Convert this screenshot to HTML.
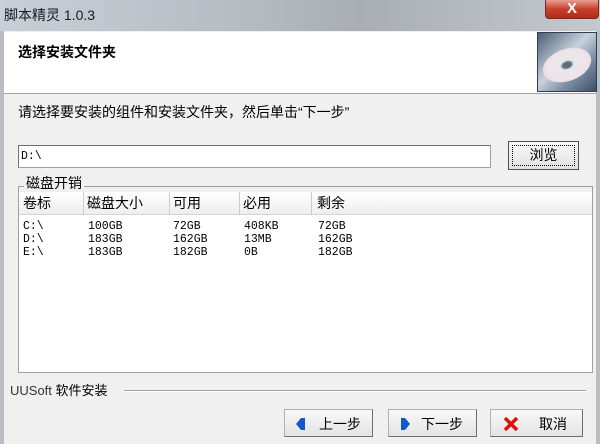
<!DOCTYPE html>
<html><head><meta charset="utf-8"><style>
*{margin:0;padding:0;box-sizing:border-box}
body{width:600px;height:444px;overflow:hidden;background:#f0f0f0;font-family:"Liberation Sans","Noto Sans CJK SC",sans-serif;font-size:13px;color:#000;position:relative}
.a{position:absolute}
.mono{font-family:"Liberation Mono","Noto Sans CJK SC",monospace;font-size:11.5px}
.btn{position:absolute;height:28px;background:linear-gradient(#f8f8f8,#e4e4e4);border:1px solid #b0b0b0;border-right-color:#707070;border-bottom-color:#707070;font-size:14px}
.btn svg{position:absolute;top:7px}
.btn span{position:absolute;top:4px}
</style></head><body>
<div class="a" style="left:0;top:0;width:600px;height:31px;background:linear-gradient(90deg,#c9cfd6,#b6bcc2 40%,#a9aeb3 60%,#c4c9cf)"></div>
<div class="a" style="left:4px;top:5px;font-size:14px;color:#1a1a2a">脚本精灵 1.0.3</div>
<div class="a" style="left:545px;top:0;width:54px;height:19px;background:linear-gradient(#e6a090,#c8412c 50%,#b22a18);border:1px solid #7a2a20;border-top:none;border-radius:0 0 4px 4px;color:#fff;font-weight:bold;font-size:15px;text-align:center;line-height:17px">X</div>
<div class="a" style="left:0;top:31px;width:4px;height:413px;background:#b9bec4"></div>
<div class="a" style="left:596px;top:31px;width:4px;height:413px;background:#b9bec4"></div>
<div class="a" style="left:4px;top:32px;width:592px;height:62px;background:#fff;border-bottom:1px solid #a0a0a0"></div>
<div class="a" style="left:18px;top:42px;font-weight:bold;font-size:14px">选择安装文件夹</div>
<div class="a" style="left:537px;top:32px;width:60px;height:60px;background:linear-gradient(135deg,#4b5d75,#c9d2de 45%,#7a8ca2 70%,#3e5068);border:1px solid #2d4058"></div>
<div class="a" style="left:542px;top:49px;width:50px;height:32px;border-radius:50%;background:radial-gradient(ellipse,#5d6c7c 12%,#e4e8ec 20%,#f0e4ea 55%,#d4d6d8 100%);transform:rotate(-20deg)"></div>
<div class="a" style="left:18px;top:102px;font-size:14px">请选择要安装的组件和安装文件夹，然后单击“下一步”</div>
<div class="a mono" style="left:18px;top:145px;width:473px;height:23px;background:#fff;border:1px solid #a0a0a0;border-top-color:#707070;border-left-color:#707070;padding:4px 2px">D:\</div>
<div class="a" style="left:508px;top:141px;width:71px;height:29px;border:1px solid #505050;background:linear-gradient(#f8f8f8,#e2e2e2);padding:3px"><div style="border:1px dotted #000;width:63px;height:21px;text-align:center;line-height:19px;font-size:14px">浏览</div></div>
<div class="a" style="left:18px;top:186px;width:575px;height:187px;border:1px solid #a0a0a0"></div>
<div class="a" style="left:24px;top:176px;background:#f0f0f0;padding:0 2px;font-size:14px;line-height:14px">磁盘开销</div>
<div class="a" style="left:19px;top:192px;width:573px;height:180px;background:#fff"></div>
<div class="a" style="left:19px;top:192px;width:573px;height:23px;background:linear-gradient(#fff,#eee);border-bottom:1px solid #d5d5d5;font-size:14px;line-height:23px">
<span class="a" style="left:4px">卷标</span><span class="a" style="left:68px">磁盘大小</span><span class="a" style="left:154px">可用</span><span class="a" style="left:224px">必用</span><span class="a" style="left:298px">剩余</span>
<span class="a" style="left:64px;top:0;width:1px;height:23px;background:#ccc"></span><span class="a" style="left:150px;top:0;width:1px;height:23px;background:#ccc"></span><span class="a" style="left:220px;top:0;width:1px;height:23px;background:#ccc"></span><span class="a" style="left:292px;top:0;width:1px;height:23px;background:#ccc"></span></div>
<div class="a mono" style="left:23px;top:220px;line-height:13px;white-space:pre">C:\
D:\
E:\</div>
<div class="a mono" style="left:88px;top:220px;line-height:13px;white-space:pre">100GB
183GB
183GB</div>
<div class="a mono" style="left:173px;top:220px;line-height:13px;white-space:pre">72GB
162GB
182GB</div>
<div class="a mono" style="left:244px;top:220px;line-height:13px;white-space:pre">408KB
13MB
0B</div>
<div class="a mono" style="left:318px;top:220px;line-height:13px;white-space:pre">72GB
162GB
182GB</div>
<div class="a" style="left:10px;top:380px;font-size:13px"><span style="color:#333">UUSoft</span> 软件安装</div>
<div class="a" style="left:124px;top:390px;width:462px;height:2px;border-top:1px solid #a0a0a0;border-bottom:1px solid #fff"></div>
<div class="btn" style="left:284px;top:409px;width:89px"><svg style="left:11px" width="10" height="14" viewBox="0 0 10 14"><polygon points="0,7 5,1 9,1 9,13 5,13" fill="#1457c8"/></svg><span style="left:34px">上一步</span></div>
<div class="btn" style="left:388px;top:409px;width:89px"><svg style="left:11px" width="10" height="14" viewBox="0 0 10 14"><polygon points="1,1 5,1 10,7 5,13 1,13" fill="#1457c8"/></svg><span style="left:32px">下一步</span></div>
<div class="btn" style="left:490px;top:409px;width:93px"><svg style="left:12px" width="16" height="14" viewBox="0 0 16 14"><path d="M2 1L14 13M14 1L2 13" stroke="#e01010" stroke-width="3.5"/></svg><span style="left:48px">取消</span></div>
</body></html>
